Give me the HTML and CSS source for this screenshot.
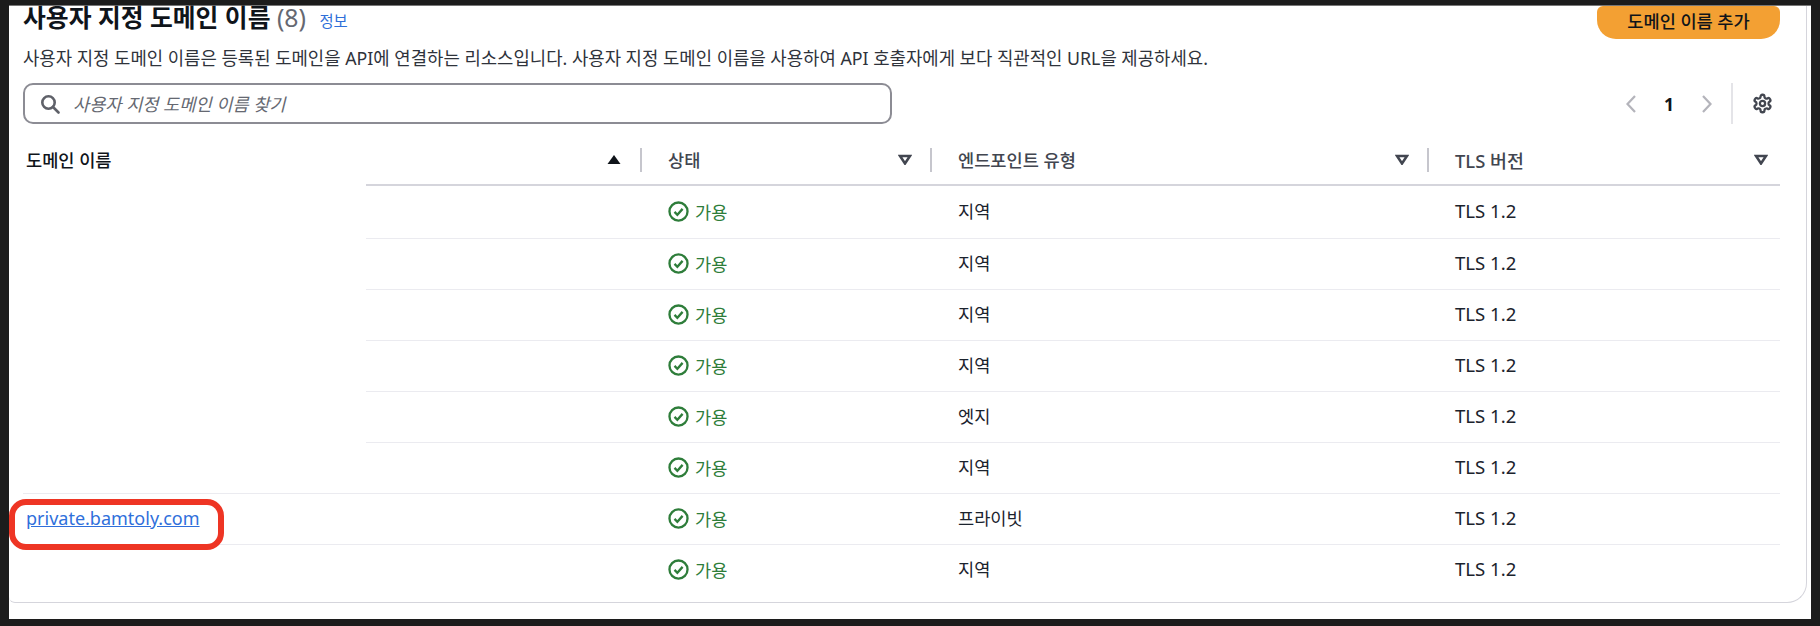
FILE: index.html
```html
<!DOCTYPE html>
<html lang="ko">
  <head>
    <meta charset="UTF-8" />
    <meta name="viewport" content="width=device-width, initial-scale=1.0" />
    <title>사용자 지정 도메인 이름</title>
    <link rel="stylesheet" href="styles.css">
  </head>
  <body>
    <div class="panel">
      <div class="card">
        <div class="top-row">
          <h1 class="title">사용자 지정 도메인 이름 <span class="count">(8)</span> <a class="info" href="#">정보</a></h1>
          <button class="add-btn">도메인 이름 추가</button>
        </div>
        <p class="desc">사용자 지정 도메인 이름은 등록된 도메인을 API에 연결하는 리소스입니다. 사용자 지정 도메인 이름을 사용하여 API 호출자에게 보다 직관적인 URL을 제공하세요.</p>
        <div class="tools">
          <div class="search">
            <svg class="search-icon" viewBox="0 0 20 20"><circle cx="8.5" cy="8.5" r="6.2"/><path d="M13 13l5.5 5.5"/></svg>
            <span class="placeholder">사용자 지정 도메인 이름 찾기</span>
          </div>
          <div class="pager">
            <svg class="chev" viewBox="0 0 12 20"><path d="M10 2L2.5 10l7.5 8"/></svg>
            <span class="page-num">1</span>
            <svg class="chev" viewBox="0 0 12 20"><path d="M2 2l7.5 8L2 18"/></svg>
            <span class="pager-sep"></span>
            <svg class="gear" viewBox="0 0 24 24"><path d="M12.22 2h-.44a2 2 0 0 0-2 2v.18a2 2 0 0 1-1 1.73l-.43.25a2 2 0 0 1-2 0l-.15-.08a2 2 0 0 0-2.73.73l-.22.38a2 2 0 0 0 .73 2.73l.15.1a2 2 0 0 1 1 1.72v.51a2 2 0 0 1-1 1.74l-.15.09a2 2 0 0 0-.73 2.73l.22.38a2 2 0 0 0 2.73.73l.15-.08a2 2 0 0 1 2 0l.43.25a2 2 0 0 1 1 1.73V20a2 2 0 0 0 2 2h.44a2 2 0 0 0 2-2v-.18a2 2 0 0 1 1-1.73l.43-.25a2 2 0 0 1 2 0l.15.08a2 2 0 0 0 2.73-.73l.22-.39a2 2 0 0 0-.73-2.73l-.15-.08a2 2 0 0 1-1-1.74v-.5a2 2 0 0 1 1-1.74l.15-.09a2 2 0 0 0 .73-2.73l-.22-.38a2 2 0 0 0-2.73-.73l-.15.08a2 2 0 0 1-2 0l-.43-.25a2 2 0 0 1-1-1.73V4a2 2 0 0 0-2-2z"/><circle cx="12" cy="12" r="3"/></svg>
          </div>
        </div>
        <table class="domains">
          <colgroup>
            <col class="col-name" />
            <col class="col-gap" />
            <col class="col-status" />
            <col class="col-type" />
            <col class="col-tls" />
          </colgroup>
          <thead>
            <tr>
              <th class="th-name">도메인 이름</th>
              <th class="th-rest">
                <div class="th-inner no-sep">
                  <span></span>
                  <svg class="caret" viewBox="0 0 14 11"><path class="solid" d="M7 1l6.5 9H.5z"/></svg>
                </div>
              </th>
              <th>
                <div class="th-inner">
                  <span>상태</span>
                  <svg class="caret" viewBox="0 0 14 11"><path d="M2 2h10l-5 7.5z"/></svg>
                </div>
              </th>
              <th>
                <div class="th-inner">
                  <span>엔드포인트 유형</span>
                  <svg class="caret" viewBox="0 0 14 11"><path d="M2 2h10l-5 7.5z"/></svg>
                </div>
              </th>
              <th>
                <div class="th-inner last">
                  <span>TLS 버전</span>
                  <svg class="caret" viewBox="0 0 14 11"><path d="M2 2h10l-5 7.5z"/></svg>
                </div>
              </th>
            </tr>
          </thead>
          <tbody>
            <tr class="first">
              <td class="hidden-name"></td><td></td>
              <td><span class="ok"><svg viewBox="0 0 20 20"><circle cx="10" cy="10" r="8.6"/><path d="M6.2 10.4l2.7 2.7 5-5.6"/></svg>가용</span></td>
              <td>지역</td><td>TLS 1.2</td>
            </tr>
            <tr>
              <td class="hidden-name"></td><td></td>
              <td><span class="ok"><svg viewBox="0 0 20 20"><circle cx="10" cy="10" r="8.6"/><path d="M6.2 10.4l2.7 2.7 5-5.6"/></svg>가용</span></td>
              <td>지역</td><td>TLS 1.2</td>
            </tr>
            <tr>
              <td class="hidden-name"></td><td></td>
              <td><span class="ok"><svg viewBox="0 0 20 20"><circle cx="10" cy="10" r="8.6"/><path d="M6.2 10.4l2.7 2.7 5-5.6"/></svg>가용</span></td>
              <td>지역</td><td>TLS 1.2</td>
            </tr>
            <tr>
              <td class="hidden-name"></td><td></td>
              <td><span class="ok"><svg viewBox="0 0 20 20"><circle cx="10" cy="10" r="8.6"/><path d="M6.2 10.4l2.7 2.7 5-5.6"/></svg>가용</span></td>
              <td>지역</td><td>TLS 1.2</td>
            </tr>
            <tr>
              <td class="hidden-name"></td><td></td>
              <td><span class="ok"><svg viewBox="0 0 20 20"><circle cx="10" cy="10" r="8.6"/><path d="M6.2 10.4l2.7 2.7 5-5.6"/></svg>가용</span></td>
              <td>엣지</td><td>TLS 1.2</td>
            </tr>
            <tr>
              <td></td><td></td>
              <td><span class="ok"><svg viewBox="0 0 20 20"><circle cx="10" cy="10" r="8.6"/><path d="M6.2 10.4l2.7 2.7 5-5.6"/></svg>가용</span></td>
              <td>지역</td><td>TLS 1.2</td>
            </tr>
            <tr>
              <td class="name-cell"><a class="domain-link" href="#">private.bamtoly.com</a><span class="highlight"></span></td><td></td>
              <td><span class="ok"><svg viewBox="0 0 20 20"><circle cx="10" cy="10" r="8.6"/><path d="M6.2 10.4l2.7 2.7 5-5.6"/></svg>가용</span></td>
              <td>프라이빗</td><td>TLS 1.2</td>
            </tr>
            <tr class="end">
              <td></td><td></td>
              <td><span class="ok"><svg viewBox="0 0 20 20"><circle cx="10" cy="10" r="8.6"/><path d="M6.2 10.4l2.7 2.7 5-5.6"/></svg>가용</span></td>
              <td>지역</td><td>TLS 1.2</td>
            </tr>
          </tbody>
        </table>
      </div>
    </div>
  </body>
</html>
```

FILE: styles.css
```css
html,
body {
  height: 100%;
}
body {
  margin: 0;
  background: #1c1c1c;
  font-family: "Noto Sans", "Noto Sans CJK KR", sans-serif;
  font-size: 17.6px;
  color: #0f141a;
  overflow: hidden;
}
.panel {
  margin: 5px 9px 0;
  height: 614px;
  background: #fff;
  padding-right: 4px;
  box-sizing: border-box;
  border-top: 1px solid #777;
}
.card {
  height: 597px;
  box-sizing: border-box;
  padding: 0 26px 0 14px;
  border-right: 1px solid #d5d5dc;
  border-bottom: 1px solid #d5d5dc;
  border-radius: 0 0 20px 6px;
}
.top-row {
  display: flex;
  justify-content: space-between;
  align-items: flex-end;
  height: 33px;
}
.title {
  margin: 0 0 1px;
  font-size: 24.8px;
  line-height: 32px;
  font-weight: 700;
}
.count {
  font-weight: 400;
  color: #656871;
}
.info {
  margin-left: 7px;
  font-size: 15.4px;
  font-weight: 400;
  color: #2f6fd9;
  text-decoration: none;
}
.add-btn {
  width: 183px;
  height: 33px;
  padding: 0 0 5px;
  border: none;
  border-radius: 6px 6px 19px 19px;
  background: #f3a033;
  color: #0f141a;
  font-family: inherit;
  font-size: 17.6px;
  font-weight: 500;
}
.desc {
  margin: 7px 0 0;
  font-size: 17.8px;
  line-height: 24px;
  color: #2f333b;
}
.tools {
  display: flex;
  justify-content: space-between;
  align-items: center;
  margin-top: 13px;
  height: 41px;
}
.search {
  display: flex;
  align-items: center;
  width: 869px;
  height: 41px;
  box-sizing: border-box;
  padding-left: 15px;
  border: 2px solid #8c8c94;
  border-radius: 10px;
}
.search-icon {
  width: 20px;
  height: 20px;
  fill: none;
  stroke: #5f6169;
  stroke-width: 2.6;
  stroke-linecap: round;
}
.placeholder {
  margin-left: 13px;
  font-style: italic;
  color: #656871;
}
.pager {
  display: flex;
  align-items: center;
  height: 41px;
}
.chev {
  width: 12px;
  height: 20px;
  fill: none;
  stroke: #b4b4bb;
  stroke-width: 2.2;
}
.page-num {
  width: 64px;
  text-align: center;
  font-weight: 700;
}
.pager-sep {
  width: 2px;
  height: 41px;
  margin-left: 18px;
  background: #e4e4e8;
}
.gear {
  width: 21px;
  height: 21px;
  margin: 0 7px 0 19px;
  fill: none;
  stroke: #424650;
  stroke-width: 2.6;
}
.domains {
  width: 1757px;
  margin-top: 23px;
  table-layout: fixed;
  border-collapse: collapse;
}
.col-name {
  width: 343px;
}
.col-gap {
  width: 274px;
}
.col-status {
  width: 290px;
}
.col-type {
  width: 497px;
}
.col-tls {
  width: 353px;
}
th {
  height: 24px;
  padding: 0 0 12px;
  text-align: left;
  font-size: 17.6px;
  font-weight: 500;
  color: #424650;
  border-bottom: 2px solid #d5d5dc;
}
th:last-child {
  font-size: 18.4px;
}
.th-name {
  padding-left: 3px;
  color: #0f141a;
  border-bottom-color: transparent;
}
.th-inner {
  display: flex;
  justify-content: space-between;
  align-items: center;
  height: 24px;
  padding: 0 18px 0 26px;
  border-left: 2px solid #c6c6cd;
}
.th-inner.no-sep {
  border-left: none;
  padding-right: 19px;
}
.th-inner.last {
  padding-right: 12px;
}
.caret {
  width: 14px;
  height: 11px;
  fill: none;
  stroke: #424650;
  stroke-width: 2.6;
}
.caret .solid {
  fill: #0f141a;
  stroke: none;
}
td {
  height: 51px;
  padding: 0 0 2px 28px;
  box-sizing: border-box;
  border-bottom: 1px solid #ebebf0;
  font-size: 17.6px;
  color: #1b232d;
}
td:first-child,
td:nth-child(2) {
  padding: 0;
}
td:last-child {
  font-size: 18.6px;
}
tr.first td {
  height: 53px;
}
td.hidden-name {
  border-bottom-color: transparent;
}
tr.end td {
  border-bottom: none;
}
.ok {
  display: inline-flex;
  align-items: center;
  gap: 6px;
  vertical-align: middle;
  color: #2e7d3a;
}
.ok svg {
  width: 21px;
  height: 21px;
  fill: none;
  stroke: #2e7d3a;
  stroke-width: 2.2;
}
.name-cell {
  position: relative;
}
td.name-cell {
  padding: 0 0 2px 3px;
}
.domain-link {
  font-size: 18px;
  color: #2f6fdb;
}
/* red marker drawn over the screenshot */
.highlight {
  position: absolute;
  left: -14px;
  top: 5px;
  width: 215px;
  height: 51px;
  box-sizing: border-box;
  border: 6px solid #ee3524;
  border-radius: 17px;
}
```
